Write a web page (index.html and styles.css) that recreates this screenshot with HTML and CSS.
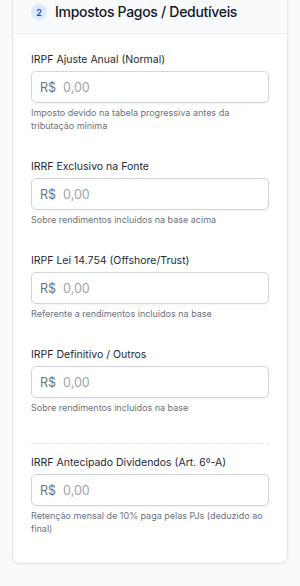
FILE: index.html
```html
<!DOCTYPE html>
<html lang="pt-BR">
<head>
  <meta charset="UTF-8">
  <meta name="viewport" content="width=device-width, initial-scale=1.0">
  <title>Impostos Pagos</title>
  <link rel="stylesheet" href="styles.css">
</head>
<body>
  <div class="page">
    <section class="card">
      <div class="card-header">
        <span class="step">2</span>
        <h2>Impostos Pagos / Dedutíveis</h2>
      </div>
      <div class="card-body">
        <div class="field">
          <label for="irpf-ajuste">IRPF Ajuste Anual (Normal)</label>
          <div class="money">
            <span class="prefix">R$</span>
            <input type="text" id="irpf-ajuste" placeholder="0,00">
          </div>
          <p class="hint">Imposto devido na tabela progressiva antes da tributação mínima</p>
        </div>
        <div class="field">
          <label for="irrf-fonte">IRRF Exclusivo na Fonte</label>
          <div class="money">
            <span class="prefix">R$</span>
            <input type="text" id="irrf-fonte" placeholder="0,00">
          </div>
          <p class="hint">Sobre rendimentos incluídos na base acima</p>
        </div>
        <div class="field">
          <label for="irpf-offshore">IRPF Lei 14.754 (Offshore/Trust)</label>
          <div class="money">
            <span class="prefix">R$</span>
            <input type="text" id="irpf-offshore" placeholder="0,00">
          </div>
          <p class="hint">Referente a rendimentos incluídos na base</p>
        </div>
        <div class="field">
          <label for="irpf-definitivo">IRPF Definitivo / Outros</label>
          <div class="money">
            <span class="prefix">R$</span>
            <input type="text" id="irpf-definitivo" placeholder="0,00">
          </div>
          <p class="hint">Sobre rendimentos incluídos na base</p>
        </div>
        <div class="field divided">
          <label for="irrf-dividendos">IRRF Antecipado Dividendos (Art. 6º-A)</label>
          <div class="money">
            <span class="prefix">R$</span>
            <input type="text" id="irrf-dividendos" placeholder="0,00">
          </div>
          <p class="hint">Retenção mensal de 10% paga pelas PJs (deduzido ao final)</p>
        </div>
      </div>
    </section>
    <div class="next-card"></div>
  </div>
</body>
</html>
```

FILE: styles.css
```css
body {
  font-family: Inter, 'Noto Sans', sans-serif;
  margin: 0;
  padding: 0;
  background-color: #f8fafc;
  color: #111827;
}
.page {
  margin-top: -14px;
  padding: 0 12px;
}
.card {
  background-color: white;
  border: 1px solid #e5e7eb;
  border-radius: 8px;
  box-shadow: 0 1px 2px rgba(0,0,0,0.04);
  overflow: hidden;
}
.card-header {
  display: flex;
  align-items: center;
  gap: 8px;
  padding: 14px 18px 10px;
  background-color: #f8fafc;
  border-bottom: 1px solid #eef0f3;
}
.step {
  width: 16px;
  height: 16px;
  border-radius: 50%;
  background-color: #dbeafe;
  color: #1d4ed8;
  font-size: 9px;
  font-weight: 600;
  display: flex;
  align-items: center;
  justify-content: center;
}
h2 {
  margin: 0;
  font-size: 14px;
  font-weight: 500;
  letter-spacing: -0.3px;
  line-height: 22px;
  color: #111827;
}
.card-body {
  padding: 18px 18px 28px;
  display: flex;
  flex-direction: column;
  gap: 27px;
}
.field label {
  display: block;
  font-size: 10.5px;
  line-height: 16px;
  color: #1f2937;
  margin-bottom: 3px;
}
.money {
  display: flex;
  align-items: center;
  height: 30px;
  border: 1px solid #d1d5db;
  border-radius: 5px;
  box-shadow: 0 1px 2px rgba(0,0,0,0.05);
  padding-left: 8px;
}
.prefix {
  font-size: 12.5px;
  color: #6b7280;
  margin-right: 7px;
}
.money input {
  flex: 1;
  min-width: 0;
  border: none;
  outline: none;
  padding: 0;
  font-family: inherit;
  font-size: 12.5px;
  color: #111827;
  background: transparent;
}
.money input::placeholder {
  color: #9ca3af;
}
.hint {
  margin: 3px 0 0;
  font-size: 9px;
  line-height: 13px;
  color: #6b7280;
}
.divided {
  border-top: 1px dashed #e5e7eb;
  padding-top: 11px;
  margin-top: 2px;
}
.next-card {
  margin: 23px 8px 0;
  height: 20px;
  border-top: 1px solid #e5e7eb;
}
```
